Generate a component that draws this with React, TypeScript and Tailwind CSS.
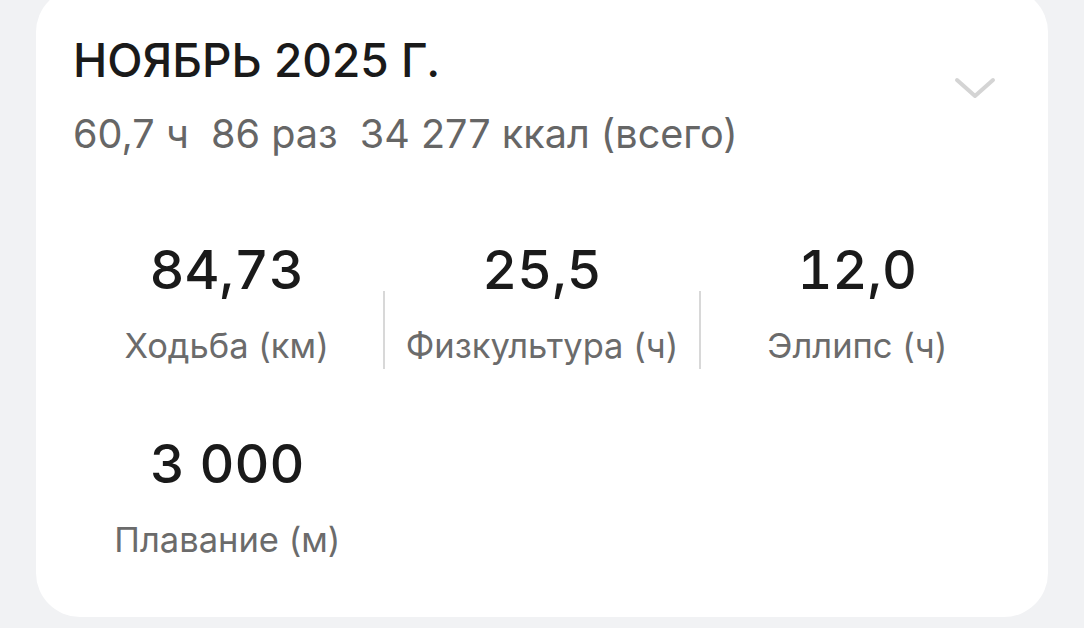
import React from "react";

interface Stat {
    value: string;
    label: string;
}

const stats: Stat[] = [
    { value: "84,73", label: "Ходьба (км)" },
    { value: "25,5", label: "Физкультура (ч)" },
    { value: "12,0", label: "Эллипс (ч)" },
];

const StatCell = ({ value, label }: Stat) => (
    <div className="flex flex-1 flex-col items-center">
        <span className="text-[54px] leading-[60px] font-medium tabular-nums text-[#1a1a1a]">{value}</span>
        <span className="mt-[26px] text-[34.5px] leading-[40px] text-[#6b6b6b]">{label}</span>
    </div>
);

const Divider = () => <div className="mt-[51px] h-[78px] w-[2px] bg-[#d8d8d8]" />;

export default function App() {
    return (
        <div
            className="h-[628px] w-[1084px] overflow-hidden bg-[#f1f2f4]"
            style={{ fontFamily: "Inter, Roboto, 'Noto Sans', sans-serif" }}
        >
            <div className="mx-[36px] mt-[-12px] h-[629px] rounded-[44px] bg-white px-[34px]">
                {/* header */}
                <div className="flex items-start justify-between pt-[44px]">
                    <div className="pl-[3px]">
                        <h1 className="text-[46px] leading-[56px] font-medium text-[#1a1a1a]">НОЯБРЬ 2025 Г.</h1>
                        <p className="mt-[22px] text-[39.6px] leading-[48px] whitespace-pre text-[#666666]">
                            {"60,7 ч  86 раз  34 277 ккал (всего)"}
                        </p>
                    </div>
                    <svg className="mt-[44px] mr-[17px]" width="44" height="26" viewBox="0 0 44 26" fill="none">
                        <path d="M4 4 L22 20 L40 4" stroke="#d4d4d4" strokeWidth="4" strokeLinecap="round" strokeLinejoin="round" />
                    </svg>
                </div>

                {/* stats */}
                <div className="mt-[82px] flex">
                    <StatCell {...stats[0]} />
                    <Divider />
                    <StatCell {...stats[1]} />
                    <Divider />
                    <StatCell {...stats[2]} />
                </div>
                <div className="mt-[65px] flex">
                    <StatCell value="3 000" label="Плавание (м)" />
                    <div className="flex-1" />
                    <div className="flex-1" />
                </div>
            </div>
        </div>
    );
}
